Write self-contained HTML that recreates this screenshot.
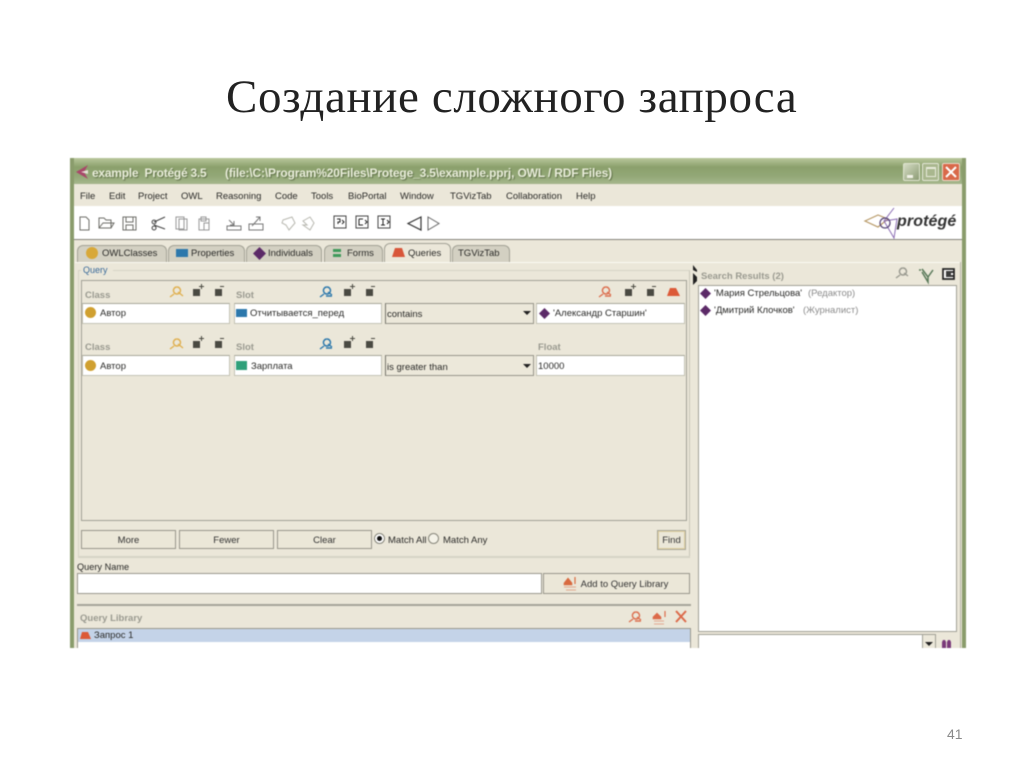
<!DOCTYPE html>
<html><head><meta charset="utf-8"><style>
html,body{margin:0;padding:0;background:#fff}
body{position:relative;width:1024px;height:767px;overflow:hidden;font-family:"Liberation Sans","DejaVu Sans",sans-serif}
div,span.t{position:absolute;box-sizing:border-box}
.t{white-space:nowrap;font-size:9.5px;color:#2a2a28;line-height:12px}
.g{color:#9a9a90;font-weight:bold;font-size:9.5px}
.f{background:#fff;border:1px solid #c4c3b4;border-top-color:#a8a79a}
.b{background:#ebe7d8;border:1px solid #98978c;text-align:center;font-size:9.5px;color:#333;line-height:19px}
.tab{background:#d3d0c2;border:1px solid #a3a296;border-bottom:none;border-radius:6px 6px 0 0;height:17px;top:245px}
svg{position:absolute;overflow:visible}
#w{filter:blur(.45px);left:0;top:0;width:1024px;height:767px}
</style></head><body>
<div class="t" style="left:226px;top:67px;font:47px/60px 'Liberation Serif',serif;color:#222;letter-spacing:.62px">Создание сложного запроса</div>
<div class="t" style="left:947px;top:726px;font-size:14px;line-height:16px;color:#8a8a8a">41</div>
<div id="w">
<div style="left:70px;top:158px;width:896px;height:490px;background:#ebe7d9"></div>
<div style="left:70px;top:158px;width:896px;height:26px;background:linear-gradient(#b9c79c 0,#8ba06c 35%,#93a877 70%,#a5b68c 100%)"></div>
<div style="left:70px;top:158px;width:4px;height:490px;background:#8a9c6c"></div>
<div style="left:962px;top:158px;width:4px;height:490px;background:#8a9c6c"></div>
<svg style="left:76px;top:165px" width="14" height="14"><path d="M0 7L12 0L8 7L12 14Z" fill="#a8486a"/><path d="M5 7L12 5V9Z" fill="#e8e0d8"/></svg>
<div class="t" style="left:92px;top:166px;font-size:12px;font-weight:bold;color:#e9edda;text-shadow:1px 1px 1px #5f7048;line-height:15px;letter-spacing:-.25px">example&nbsp; Protégé 3.5</div>
<div class="t" style="left:225px;top:166px;font-size:12px;font-weight:bold;color:#e9edda;text-shadow:1px 1px 1px #5f7048;line-height:15px;letter-spacing:-.16px">(file:\C:\Program%20Files\Protege_3.5\example.pprj, OWL / RDF Files)</div>
<div style="left:903px;top:163px;width:17px;height:18px;background:linear-gradient(135deg,#d5dcc4,#8c9c74);border:1px solid #dfe4d0;border-radius:2px"><div style="left:3px;top:11px;width:6px;height:3px;background:#f2f2e8"></div></div>
<div style="left:922px;top:163px;width:17px;height:18px;background:#a9b78e;border:1px solid #e4e8d8;border-radius:2px"><div style="left:3px;top:3px;width:10px;height:10px;border:1px solid #e8eadb;border-top-width:2px"></div></div>
<div style="left:942px;top:163px;width:18px;height:18px;background:#d9694a;border:1px solid #ecd8c8;border-radius:2px"></div>
<svg style="left:942px;top:163px" width="18" height="18"><path d="M4 4L14 14M14 4L4 14" stroke="#fff" stroke-width="2"/></svg>

<div class="t" style="left:80px;top:191px">File</div>
<div class="t" style="left:109px;top:191px">Edit</div>
<div class="t" style="left:138px;top:191px">Project</div>
<div class="t" style="left:181px;top:191px">OWL</div>
<div class="t" style="left:216px;top:191px">Reasoning</div>
<div class="t" style="left:275px;top:191px">Code</div>
<div class="t" style="left:311px;top:191px">Tools</div>
<div class="t" style="left:348px;top:191px">BioPortal</div>
<div class="t" style="left:400px;top:191px">Window</div>
<div class="t" style="left:450px;top:191px">TGVizTab</div>
<div class="t" style="left:506px;top:191px">Collaboration</div>
<div class="t" style="left:576px;top:191px">Help</div>

<div style="left:74px;top:206px;width:888px;height:34px;background:#fff;border-bottom:1px solid #85847a"></div>
<svg style="left:74px;top:206px" width="400" height="34" fill="none" stroke="#6e6e68" stroke-width="1">
<path d="M6 11H12L15 14V24H6Z"/>
<path d="M25 22V12H30L32 14H37V22ZM25 22L29 17H40L37 22"/>
<path d="M49 11H62V24H49ZM52 11V16H59V11M52 24V19H59V24"/>
<path d="M80 16L91 11M80 19L91 23M80 14a2 2 0 1 0 .1 0M80 20a2 2 0 1 0 .1 0" stroke="#444"/>
<path d="M102 11H110V23H102ZM105 13H113V24H105Z" stroke="#999"/>
<path d="M125 13H135V24H125ZM127 11H132V15H127ZM130 17H135V24H130Z" stroke="#999"/>
<path d="M153 20H167V24H153ZM155 14L160 19M160 15V19H156" stroke="#777"/>
<path d="M175 24V18H189V24ZM178 20L186 11M182 11H186V15" stroke="#777"/>
<path d="M209 14L218 11L221 17L215 24L212 19L208 17Z" stroke="#b8b8b0"/>
<path d="M236 11L229 15L233 19L229 19L236 24L240 17Z" stroke="#b8b8b0"/>
<rect x="260" y="10" width="12" height="12" stroke="#444"/>
<rect x="282" y="10" width="12" height="12" stroke="#444"/>
<rect x="304" y="10" width="12" height="12" stroke="#444"/>
<path d="M263 13h3v3h-2v2M268 14l2 2-2 2M285 13h4M285 13v6h4M291 14l2 2-2 2M307 13h4M309 13v6M307 19h4M313 14l2 2-2 2" stroke="#222"/>
<path d="M347 11L334 17.500L347 24Z" stroke="#333" stroke-width="1.200"/>
<path d="M354 11L365 17.500L354 24Z" stroke="#666"/>
</svg>
<svg style="left:864px;top:207px" width="36" height="34" fill="none"><path d="M1 14L14 8L24 12L14 20Z" stroke="#b89a68" stroke-width="1.200"/><path d="M30 1L20 14L30 31M20 14L30 31L33 12Z" stroke="#8c6eb4" stroke-width="1"/><circle cx="21" cy="16" r="5" stroke="#5b4a7a" stroke-width="1.300"/></svg>
<div class="t" style="left:897px;top:212px;font:italic bold 16px/20px 'Liberation Sans',sans-serif;color:#333;letter-spacing:.1px">protégé</div>

<div class="tab" style="left:77px;width:90px"></div>
<div class="tab" style="left:168px;width:77px"></div>
<div class="tab" style="left:246px;width:76px"></div>
<div class="tab" style="left:324px;width:59px"></div>
<div class="tab" style="left:384px;width:67px;background:#ebe7d9;top:243px;height:20px"></div>
<div class="tab" style="left:452px;width:58px"></div>
<div style="left:86px;top:247px;width:12px;height:12px;border-radius:50%;background:#d8a838"></div>
<div class="t" style="left:102px;top:248px">OWLClasses</div>
<div style="left:176px;top:249px;width:12px;height:8px;background:#2c78ac"></div>
<div class="t" style="left:191px;top:248px">Properties</div>
<svg style="left:253px;top:247px" width="13" height="13"><path d="M6.500 0L13 6.500L6.500 13L0 6.500Z" fill="#5c2a68"/></svg>
<div class="t" style="left:268px;top:248px">Individuals</div>
<div style="left:333px;top:249px;width:8px;height:3px;background:#3f9a5a"></div><div style="left:333px;top:254px;width:8px;height:3px;background:#3f9a5a"></div>
<div class="t" style="left:347px;top:248px">Forms</div>
<svg style="left:392px;top:248px" width="13" height="10"><path d="M3 0H10L13 9H0Z" fill="#d8563a"/></svg>
<div class="t" style="left:408px;top:248px">Queries</div>
<div class="t" style="left:458px;top:248px">TGVizTab</div>

<div style="left:75px;top:262px;width:886px;height:1px;background:#fbfaf2"></div>
<div style="left:78px;top:270px;width:612px;height:288px;border:1px solid #d6d4c6;border-right-color:#c8c7b8"></div>
<div style="left:81px;top:265px;width:32px;height:12px;background:#ebe7d9"></div>
<div class="t" style="left:83px;top:264px;color:#3a6a9a;font-size:9px">Query</div>
<div style="left:81px;top:280px;width:606px;height:241px;border:1px solid #a2a196"></div>

<div class="t g" style="left:85px;top:290px">Class</div>
<div class="t g" style="left:236px;top:290px">Slot</div>
<div class="t g" style="left:85px;top:342px">Class</div>
<div class="t g" style="left:236px;top:342px">Slot</div>
<div class="t g" style="left:538px;top:342px">Float</div>

<svg style="left:0;top:0" width="1024" height="767">
<g fill="none" stroke-width="1.400">
<path d="M177 287a3.500 3.500 0 1 1-.1 0M174 294l-4 3M178 292l5 4" stroke="#e0b050"/>
<path d="M177 339a3.500 3.500 0 1 1-.1 0M174 346l-4 3M178 344l5 4" stroke="#e0b050"/>
<path d="M327 287a3.500 3.500 0 1 1-.1 0M324 294l-4 3M328 292l4 3M326 296h6" stroke="#2c78ac"/>
<path d="M327 339a3.500 3.500 0 1 1-.1 0M324 346l-4 3M328 344l4 3M326 348h6" stroke="#2c78ac"/>
<path d="M606 287a3.500 3.500 0 1 1-.1 0M603 294l-4 3M607 292l4 3M605 296h6" stroke="#dc7050"/>
<path d="M903 268a3.500 3.500 0 1 1-.1 0M900 275l-4 3M904 273l4 3" stroke="#9a9a90"/>
<path d="M636 612a3.500 3.500 0 1 1-.1 0M633 619l-4 3M637 617l4 3M635 621h6" stroke="#dc7050"/>
<path d="M676 611L686 622M686 611L676 622" stroke="#dc6a4a" stroke-width="2"/>
</g>
<g fill="#4a4a42">
<rect x="193" y="289" width="7" height="7"/><rect x="215" y="289" width="7" height="7"/><rect x="344" y="289" width="7" height="7"/><rect x="366" y="289" width="7" height="7"/>
<rect x="625" y="289" width="7" height="7"/><rect x="647" y="289" width="7" height="7"/>
<rect x="193" y="341" width="7" height="7"/><rect x="215" y="341" width="7" height="7"/><rect x="344" y="341" width="7" height="7"/><rect x="366" y="341" width="7" height="7"/>
<path d="M201 284h1v2h2v1h-2v2h-1v-2h-2v-1h2ZM352 284h1v2h2v1h-2v2h-1v-2h-2v-1h2ZM633 284h1v2h2v1h-2v2h-1v-2h-2v-1h2ZM201 336h1v2h2v1h-2v2h-1v-2h-2v-1h2ZM352 336h1v2h2v1h-2v2h-1v-2h-2v-1h2Z"/>
<path d="M220 286h4v1h-4ZM371 286h4v1h-4ZM652 286h4v1h-4ZM220 338h4v1h-4ZM371 338h4v1h-4Z"/>
</g>
<path d="M670 288H676L680 296H667Z" fill="#dc5a38"/>
<path d="M653 617L657 613L661 617V619H653ZM654 621H664M654 624H664" fill="#dc6a4a" stroke="#dc6a4a" stroke-width=".6"/>
<path d="M665 611V617" stroke="#dc6a4a" stroke-width="1.200"/>
<path d="M922 269L928 277V282L922 272M933 270L928 277M919 270h2" fill="none" stroke="#5a7a5a" stroke-width="1.500"/>
<path d="M943 269H954V279H943ZM946 272H954M946 276H954M946 274H951" fill="#fff" stroke="#222" stroke-width="1.700"/>
<path d="M693 265L697 270V272L693 270ZM697 277L693 273V285L697 281" fill="#222"/>
</svg>

<div class="f" style="left:82px;top:303px;width:148px;height:21px"></div>
<div class="f" style="left:234px;top:303px;width:148px;height:21px"></div>
<div style="left:385px;top:303px;width:149px;height:21px;background:#ece8da;border:1px solid #98978c;border-left-color:#77766c"></div>
<div class="f" style="left:536px;top:303px;width:149px;height:21px"></div>
<div class="f" style="left:82px;top:355px;width:148px;height:21px"></div>
<div class="f" style="left:234px;top:355px;width:148px;height:21px"></div>
<div style="left:385px;top:355px;width:149px;height:21px;background:#ece8da;border:1px solid #98978c;border-left-color:#77766c"></div>
<div class="f" style="left:536px;top:355px;width:149px;height:21px"></div>
<div style="left:85px;top:307px;width:11px;height:11px;border-radius:50%;background:#d0a030"></div>
<div class="t" style="left:100px;top:308px">Автор</div>
<div style="left:236px;top:309px;width:11px;height:8px;background:#2c78ac"></div>
<div class="t" style="left:250px;top:308px">Отчитывается_перед</div>
<div class="t" style="left:387px;top:309px">contains</div>
<svg style="left:523px;top:311px" width="8" height="5"><path d="M0 0H8L4 4Z" fill="#222"/></svg>
<svg style="left:539px;top:308px" width="11" height="11"><path d="M5.500 0L11 5.500L5.500 11L0 5.500Z" fill="#5c2a68"/></svg>
<div class="t" style="left:553px;top:308px">'Александр Старшин'</div>
<div style="left:85px;top:360px;width:11px;height:11px;border-radius:50%;background:#d0a030"></div>
<div class="t" style="left:100px;top:361px">Автор</div>
<div style="left:236px;top:361px;width:11px;height:9px;background:#2fa07a"></div>
<div class="t" style="left:251px;top:361px">Зарплата</div>
<div class="t" style="left:387px;top:362px">is greater than</div>
<svg style="left:523px;top:364px" width="8" height="5"><path d="M0 0H8L4 4Z" fill="#222"/></svg>
<div class="t" style="left:538px;top:361px">10000</div>

<div class="b" style="left:81px;top:530px;width:95px;height:19px">More</div>
<div class="b" style="left:179px;top:530px;width:95px;height:19px">Fewer</div>
<div class="b" style="left:277px;top:530px;width:95px;height:19px">Clear</div>
<div style="left:374px;top:533px;width:11px;height:11px;border-radius:50%;background:#fff;border:1px solid #88877c"><div style="left:2px;top:2px;width:5px;height:5px;border-radius:50%;background:#111"></div></div>
<div class="t" style="left:388px;top:535px">Match All</div>
<div style="left:428px;top:533px;width:11px;height:11px;border-radius:50%;background:#f4f2e8;border:1px solid #88877c"></div>
<div class="t" style="left:443px;top:535px">Match Any</div>
<div class="b" style="left:657px;top:530px;width:29px;height:20px;border:2px solid #e0cfa0;outline:1px solid #a8a79a;outline-offset:-1px;line-height:17px">Find</div>
<div style="left:79px;top:556px;width:611px;height:1px;background:#d6d4c6"></div>

<div class="t" style="left:77px;top:561px;font-size:9.2px">Query Name</div>
<div class="f" style="left:77px;top:573px;width:465px;height:21px;border-color:#9a998e"></div>
<div class="b" style="left:543px;top:573px;width:147px;height:21px;padding-left:16px;line-height:21px">Add to Query Library</div>
<svg style="left:0;top:0" width="1024" height="767"><path d="M564 583L568 578L572 583V585H564ZM564 587H576M566 590H576" fill="#d86a40" stroke="#d86a40" stroke-width=".6"/><path d="M575 577V584" stroke="#d86a40" stroke-width="1.200"/></svg>
<div style="left:77px;top:604px;width:614px;height:2px;background:#a6a59a"></div>
<div class="t g" style="left:80px;top:613px">Query Library</div>
<div style="left:77px;top:628px;width:614px;height:20px;background:#fff;border:1px solid #9a998e;border-bottom:0"></div>
<div style="left:78px;top:629px;width:612px;height:13px;background:#c4d3e8"></div>
<svg style="left:80px;top:632px" width="11" height="8"><path d="M2 0H8L11 7H0Z" fill="#dc5a38"/></svg>
<div class="t" style="left:94px;top:630px">Запрос 1</div>

<div class="t g" style="left:701px;top:271px">Search Results (2)</div>
<div style="left:698px;top:285px;width:259px;height:347px;background:#fff;border:1px solid #a2a196"></div>
<svg style="left:700px;top:288px" width="11" height="11"><path d="M5.500 0L11 5.500L5.500 11L0 5.500Z" fill="#5c2a68"/></svg>
<div class="t" style="left:714px;top:288px">'Мария Стрельцова'</div>
<div class="t" style="left:808px;top:288px;color:#8c8c8c">(Редактор)</div>
<svg style="left:700px;top:305px" width="11" height="11"><path d="M5.500 0L11 5.500L5.500 11L0 5.500Z" fill="#5c2a68"/></svg>
<div class="t" style="left:714px;top:305px">'Дмитрий Клочков'</div>
<div class="t" style="left:803px;top:305px;color:#8c8c8c">(Журналист)</div>
<div style="left:698px;top:634px;width:238px;height:14px;background:#fff;border:1px solid #a2a196;border-bottom:0"></div>
<div style="left:922px;top:635px;width:13px;height:13px;background:#ece8da;border-left:1px solid #a2a196"></div>
<svg style="left:925px;top:642px" width="8" height="5"><path d="M0 0H8L4 4Z" fill="#222"/></svg>
<svg style="left:941px;top:640px" width="11" height="8"><path d="M1 8V2L2 0H4L5 2V8ZM6 8V2L7 0H9L10 2V8Z" fill="#7a3a7a"/></svg>
<div style="left:960px;top:262px;width:1px;height:386px;background:#b5b4a6"></div>
</div>
</body></html>
